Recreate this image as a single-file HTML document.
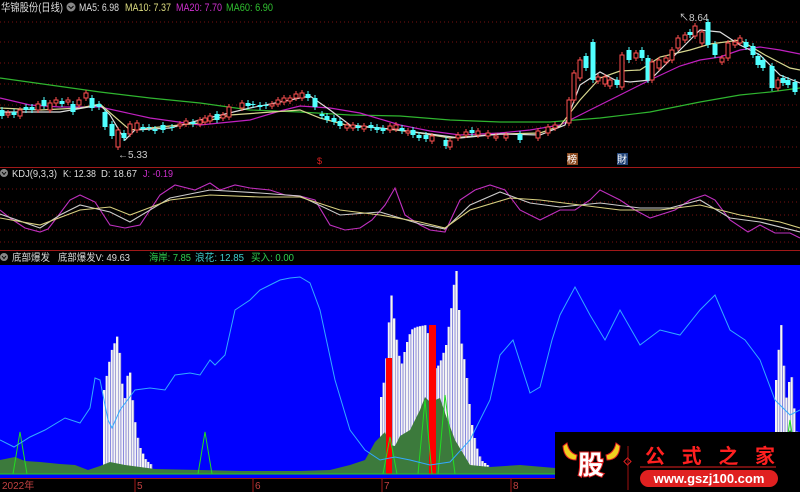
<!DOCTYPE html>
<html><head><meta charset="utf-8"><style>
html,body{margin:0;padding:0;background:#000;width:800px;height:492px;overflow:hidden}
svg{display:block}
text{font-family:"Liberation Sans","Noto Sans CJK SC",sans-serif}
</style></head><body>
<svg id="s" width="800" height="492" viewBox="0 0 800 492" font-size="10" xmlns="http://www.w3.org/2000/svg">
<rect width="800" height="492" fill="#000"/>
<g stroke="#7a1010" stroke-width="1" stroke-dasharray="1,3">
<line x1="0" y1="22" x2="800" y2="22"/><line x1="0" y1="42" x2="800" y2="42"/><line x1="0" y1="63" x2="800" y2="63"/><line x1="0" y1="84" x2="800" y2="84"/><line x1="0" y1="105" x2="800" y2="105"/><line x1="0" y1="127" x2="800" y2="127"/><line x1="0" y1="147" x2="800" y2="147"/>
<line x1="0" y1="189" x2="800" y2="189"/><line x1="0" y1="202" x2="800" y2="202"/><line x1="0" y1="215" x2="800" y2="215"/><line x1="0" y1="230" x2="800" y2="230"/><line x1="0" y1="242" x2="800" y2="242"/>
</g>
<line x1="0" y1="167.5" x2="800" y2="167.5" stroke="#a01818"/>
<line x1="0" y1="250.5" x2="800" y2="250.5" stroke="#a01818"/>
<g fill="none" stroke-width="1.2">
<polyline stroke="#2fb52f" points="0,78 50,85 100,92 150,98 200,103 250,110 300,112 350,115 400,116 450,120 500,122 550,122 600,118 650,112 700,102 740,95 770,92 800,88"/>
<polyline stroke="#c020c0" points="0,98 30,105 60,107 100,107 150,118 200,125 250,120 280,111 300,106 330,108 360,113 400,125 430,131 460,135 500,133 530,130 560,125 590,110 620,95 650,80 680,66 700,60 720,57 740,50 760,47 780,50 800,54"/>
<polyline stroke="#d8d890" points="0,108 40,110 80,108 100,104 130,130 160,127 200,123 230,115 300,110 320,118 350,126 380,128 420,133 450,138 500,134 540,133 560,126 580,100 600,78 620,71 640,70 660,57 690,50 710,44 740,40 765,55 790,68 800,70"/>
<polyline stroke="#ddd" points="0,112 60,112 100,105 110,115 125,140 135,130 170,128 200,120 250,108 310,96 330,110 350,125 400,130 460,138 500,134 540,135 565,125 580,85 600,72 615,80 630,82 650,80 670,60 700,30 720,32 740,45 760,55 780,75 800,83"/>
</g>
<g id="candles"></g>
<text x="118" y="158" fill="#ccc" font-size="10">←5.33</text>
<text x="679" y="21" fill="#ccc" font-size="10">↖8.64</text>
<text x="317" y="164" fill="#e02020" font-size="9">$</text>
<rect x="567" y="153" width="11" height="12" fill="#8a4a20"/><text x="567" y="163" fill="#fff" font-size="10">榜</text>
<rect x="617" y="153" width="11" height="12" fill="#224477"/><text x="617" y="163" fill="#fff" font-size="10">財</text>
<g fill="none" stroke-width="1.1">
<polyline stroke="#c030c0" points="0,210 10,218 25,228 40,232 48,229 55,220 70,200 80,195 95,202 110,225 125,228 140,225 160,195 175,185 195,190 210,183 220,190 235,185 250,188 270,190 285,195 300,196 315,200 330,225 345,230 360,228 372,220 385,205 395,188 405,215 420,225 430,230 445,232 460,200 475,190 490,185 505,190 520,210 540,220 560,210 575,210 590,200 600,190 620,200 635,210 650,218 675,210 690,200 705,195 715,200 730,220 748,232 760,225 775,233 790,233 800,238"/>
<polyline stroke="#ccc" points="0,214 40,228 60,215 80,205 110,212 130,222 170,198 210,190 260,193 300,196 340,215 380,212 420,224 445,229 470,205 500,192 530,203 560,207 600,203 640,208 670,208 700,200 730,218 760,222 800,232"/>
<polyline stroke="#d8d080" points="0,218 40,225 80,210 110,207 130,215 170,200 210,195 260,197 300,197 340,210 380,215 420,222 445,228 470,210 510,198 540,200 580,205 620,210 660,210 700,205 740,215 780,222 800,228"/>
</g>
<rect x="0" y="265" width="800" height="213" fill="#0000ff"/>
<g id="bars"></g>
<polygon fill="#3c7a3c" points="0,474 0,460 15,457 25,461 40,462 60,464 75,465 88,470 100,466 110,462 125,465 140,467 155,469 200,470 240,471 300,471 330,470 350,465 365,460 375,442 385,432 390,445 395,446 400,436 410,430 420,410 425,397 430,402 440,398 445,413 455,440 470,465 490,467 520,465 555,468 555,474"/>
<polygon fill="#3c7a3c" points="770,474 772,440 780,445 790,430 800,440 800,474"/>
<rect x="386" y="358" width="6" height="116" fill="#ff0000"/><rect x="429" y="325" width="7" height="149" fill="#ff0000"/>
<g fill="none" stroke="#22dd22" stroke-width="1">
<polyline points="13,474 20,432 27,474"/><polyline points="198,474 205,432 212,474"/>
<polyline points="383,474 390,437 397,474"/><polyline points="418,474 425,400 432,474"/><polyline points="438,474 445,395 455,474"/>
<polyline points="782,474 790,420 798,474"/>
<line x1="0" y1="474" x2="800" y2="474" stroke="#22cc22"/>
</g>
<polyline fill="none" stroke="#33aaff" stroke-width="1" points="0,440 14,447 30,437 45,430 65,418 80,423 90,408 95,378 100,380 108,420 112,428 120,410 135,390 150,388 165,390 175,375 190,373 200,375 210,360 215,365 225,355 235,310 250,300 260,290 270,285 280,280 290,278 300,277 310,283 320,310 335,380 350,430 365,450 380,460 395,457 410,460 430,465 450,462 470,440 490,400 500,355 513,340 530,393 540,387 552,340 560,315 575,287 590,315 605,340 620,310 640,345 660,330 680,335 700,310 715,295 730,330 745,340 760,360 775,400 790,415 800,410"/>
<rect x="0" y="478" width="800" height="14" fill="#000"/>
<line x1="0" y1="478.5" x2="800" y2="478.5" stroke="#a01818"/>
<g stroke="#a01818"><line x1="135" y1="479" x2="135" y2="492"/><line x1="253" y1="479" x2="253" y2="492"/><line x1="382" y1="479" x2="382" y2="492"/><line x1="511" y1="479" x2="511" y2="492"/></g>
<g fill="#c04040" font-size="10"><text x="2" y="489">2022年</text><text x="137" y="489">5</text><text x="255" y="489">6</text><text x="384" y="489">7</text><text x="513" y="489">8</text></g>
<text x="1" y="11" fill="#ddd" font-size="11" textLength="62" lengthAdjust="spacingAndGlyphs">华锦股份(日线)</text>
<circle cx="71" cy="7" r="4.5" fill="#888"/><path d="M68.5,6 L71,8.5 L73.5,6" stroke="#000" fill="none"/>
<text x="79" y="11" fill="#ddd" font-size="11" textLength="40" lengthAdjust="spacingAndGlyphs">MA5: 6.98</text>
<text x="125" y="11" fill="#dede80" font-size="11" textLength="46" lengthAdjust="spacingAndGlyphs">MA10: 7.37</text>
<text x="176" y="11" fill="#d030d0" font-size="11" textLength="46" lengthAdjust="spacingAndGlyphs">MA20: 7.70</text>
<text x="226" y="11" fill="#30c030" font-size="11" textLength="47" lengthAdjust="spacingAndGlyphs">MA60: 6.90</text>
<circle cx="4" cy="173" r="4" fill="#888"/><path d="M2,172 L4,174.5 L6,172" stroke="#000" fill="none"/>
<text x="12" y="177" fill="#ddd" textLength="45" lengthAdjust="spacingAndGlyphs">KDJ(9,3,3)</text><text x="63" y="177" fill="#ddd" textLength="33" lengthAdjust="spacingAndGlyphs">K: 12.38</text><text x="101" y="177" fill="#ddd" textLength="36" lengthAdjust="spacingAndGlyphs">D: 18.67</text><text x="143" y="177" fill="#d030d0" textLength="30" lengthAdjust="spacingAndGlyphs">J: -0.19</text>
<circle cx="4" cy="257" r="4" fill="#888"/><path d="M2,256 L4,258.5 L6,256" stroke="#000" fill="none"/>
<text x="12" y="261" fill="#ddd" textLength="38" lengthAdjust="spacingAndGlyphs">底部爆发</text><text x="58" y="261" fill="#ddd" textLength="72" lengthAdjust="spacingAndGlyphs">底部爆发V: 49.63</text>
<text x="149" y="261" fill="#30d050" textLength="42" lengthAdjust="spacingAndGlyphs">海岸: 7.85</text><text x="195" y="261" fill="#40d0d0" textLength="49" lengthAdjust="spacingAndGlyphs">浪花: 12.85</text><text x="251" y="261" fill="#30d050" textLength="43" lengthAdjust="spacingAndGlyphs">买入: 0.00</text>
<rect x="555" y="432" width="245" height="60" fill="#000"/>
<path d="M563,446 Q564,460 576,460 L577,455 Q569,453 567,443 Z" fill="#f0d020" stroke="#e02020"/>
<path d="M620,446 Q619,460 607,460 L606,455 Q614,453 616,443 Z" fill="#f0d020" stroke="#e02020"/>
<text x="591" y="474" fill="#fff" stroke="#e02020" stroke-width="2" paint-order="stroke" font-size="26" font-weight="bold" text-anchor="middle">股</text>
<line x1="628" y1="446" x2="628" y2="490" stroke="#a01010"/>
<rect x="625" y="459" width="5" height="5" fill="none" stroke="#e02020" transform="rotate(45 627.5 461.5)"/>
<text x="645" y="463" fill="#ff2020" font-size="20" font-weight="bold" textLength="130" lengthAdjust="spacing">公式之家</text>
<line x1="640" y1="467" x2="776" y2="467" stroke="#701010" stroke-width="2"/>
<rect x="640" y="470" width="138" height="17" rx="8.5" fill="#e02020"/>
<text x="709" y="483" fill="#fff" font-size="13" font-weight="bold" text-anchor="middle">www.gszj100.com</text>
</svg>
<script>
var C=[[2,110,116,0],[8,113,115,1],[14,112,115,0],[20,110,116,1],[26,107,110,0],[32,107,110,0],[38,104,110,1],[44,100,106,0],[50,103,110,1],[56,100,103,1],[62,101,104,0],[68,100,102,1],[73,104,112,0],[79,100,105,1],[86,93,98,1],[92,98,108,0],[99,104,107,0],[105,112,127,0],[112,124,136,0],[118,130,147,1],[124,133,138,0],[130,124,134,1],[137,123,130,1],[143,127,129,0],[149,127,128,0],[155,129,131,0],[163,125,130,0],[172,127,128,0],[180,124,126,1],[186,121,124,1],[193,122,124,0],[200,120,124,1],[205,118,122,1],[210,116,121,1],[217,114,120,0],[223,115,118,1],[229,107,117,1],[242,103,108,1],[248,103,106,0],[253,104,105,0],[260,105,107,0],[266,105,106,0],[272,104,106,1],[278,100,104,1],[284,98,102,1],[290,98,101,1],[296,94,98,1],[302,93,98,1],[308,94,98,0],[315,98,107,0],[322,114,116,0],[327,116,120,0],[334,118,122,0],[340,121,126,0],[347,125,128,1],[353,125,128,1],[358,126,128,0],[364,126,129,1],[371,125,128,0],[377,127,130,0],[383,128,131,0],[390,126,130,1],[396,125,129,1],[402,128,131,0],[408,131,133,1],[413,130,135,0],[419,135,138,0],[426,135,139,0],[432,136,141,1],[446,140,146,0],[450,141,147,1],[458,135,138,1],[466,132,135,1],[472,130,133,0],[478,131,135,1],[488,133,136,1],[496,136,138,1],[506,135,138,1],[520,134,140,0],[538,131,138,1],[548,127,133,1],[555,125,128,1],[569,100,123,1],[574,73,100,1],[580,60,78,1],[586,56,68,0],[593,42,80,0],[598,77,81,1],[605,77,84,1],[610,80,86,1],[617,80,85,0],[622,55,87,1],[629,50,60,0],[636,53,58,1],[642,50,58,0],[648,58,80,0],[652,62,80,1],[659,60,68,1],[666,58,62,1],[672,50,60,1],[678,38,48,1],[685,35,40,1],[690,32,35,0],[695,26,36,1],[702,32,43,1],[708,22,45,0],[715,44,55,0],[722,58,62,1],[728,43,58,1],[735,42,45,1],[740,38,43,1],[746,42,47,0],[753,46,55,0],[758,56,65,0],[763,60,68,0],[772,66,88,0],[778,80,88,1],[783,78,83,0],[788,80,85,0],[795,82,92,0]];
var h='';C.forEach(function(c){var x=c[0],t=c[1],b=c[2],up=c[3];var col=up?'#ff5050':'#50ffff';h+='<line x1="'+x+'" y1="'+(t-3)+'" x2="'+x+'" y2="'+(b+3)+'" stroke="'+col+'"/>';if(up)h+='<rect x="'+(x-2)+'" y="'+t+'" width="4" height="'+Math.max(1,b-t)+'" fill="#000" stroke="'+col+'"/>';else h+='<rect x="'+(x-2.5)+'" y="'+t+'" width="5" height="'+Math.max(1,b-t)+'" fill="'+col+'"/>';});
document.getElementById('candles').innerHTML=h;
var G=[[[103,390],[110,352],[117,334],[123,405],[128,362],[133,415],[138,445],[145,460],[152,466]],[[380,397],[384,375],[390,292],[395,336],[400,367],[405,345],[410,330],[415,327],[420,326],[425,325],[435,370],[440,360],[445,345],[450,310],[455,265],[460,340],[465,370],[470,420],[475,445],[480,460],[488,466]],[[775,380],[780,322],[785,400],[790,370],[795,430],[800,440]]];
var g='';G.forEach(function(P){for(var x=P[0][0];x<=P[P.length-1][0];x+=2.6){var i=0;while(i<P.length-2&&P[i+1][0]<x)i++;var a=P[i],b=P[i+1];var t=(x-a[0])/(b[0]-a[0]);var y=a[1]+(b[1]-a[1])*Math.min(1,Math.max(0,t));g+='<rect x="'+x.toFixed(1)+'" y="'+y.toFixed(1)+'" width="2" height="'+(474-y).toFixed(1)+'" fill="#f4f4f4"/><rect x="'+(x+2).toFixed(1)+'" y="'+y.toFixed(1)+'" width="0.6" height="'+(474-y).toFixed(1)+'" fill="#9090c0"/>';}});
document.getElementById('bars').innerHTML=g;
</script>
</body></html>
